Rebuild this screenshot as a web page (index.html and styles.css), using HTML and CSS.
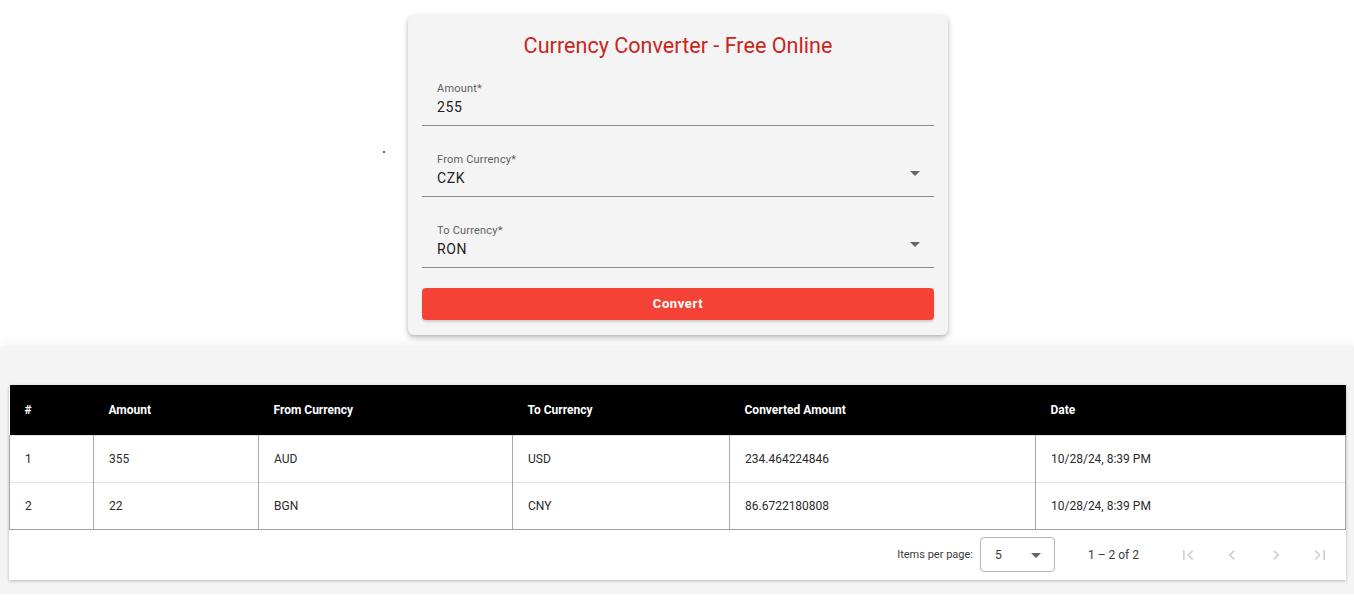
FILE: index.html
```html
<!DOCTYPE html>
<html lang="en">
<head>
<meta charset="utf-8">
<title>Currency Converter - Free Online</title>
<link rel="stylesheet" href="styles.css">
</head>
<body>
<div class="top">
  <div class="side"><span class="speck"></span></div>
  <form class="card">
    <h1 class="title">Currency Converter - Free Online</h1>
    <div class="field">
      <div class="label">Amount*</div>
      <div class="value">255</div>
    </div>
    <div class="field">
      <div class="label">From Currency*</div>
      <div class="value-row"><span class="value">CZK</span><span class="caret"></span></div>
    </div>
    <div class="field">
      <div class="label">To Currency*</div>
      <div class="value-row"><span class="value">RON</span><span class="caret"></span></div>
    </div>
    <button type="button" class="btn">Convert</button>
  </form>
  <div class="side"></div>
</div>

<section class="history">
  <div class="table-card">
    <table class="grid">
      <colgroup>
        <col style="width:84px"><col style="width:165px"><col style="width:254px"><col style="width:217px"><col style="width:306px"><col>
      </colgroup>
      <thead>
        <tr><th>#</th><th>Amount</th><th>From Currency</th><th>To Currency</th><th>Converted Amount</th><th>Date</th></tr>
      </thead>
      <tbody>
        <tr><td>1</td><td>355</td><td>AUD</td><td>USD</td><td>234.464224846</td><td>10/28/24, 8:39 PM</td></tr>
        <tr><td>2</td><td>22</td><td>BGN</td><td>CNY</td><td>86.6722180808</td><td>10/28/24, 8:39 PM</td></tr>
      </tbody>
    </table>
    <div class="paginator">
      <span class="pp-label">Items per page:</span>
      <div class="pp-select"><span>5</span><span class="caret small"></span></div>
      <span class="range">1 – 2 of 2</span>
      <div class="nav">
        <button type="button" class="nav-btn" aria-label="First page"><svg viewBox="0 0 24 24" width="24" height="24"><path d="M18.41 16.59L13.82 12l4.59-4.59L17 6l-6 6 6 6zM6 6h2v12H6z"/></svg></button>
        <button type="button" class="nav-btn" aria-label="Previous page"><svg viewBox="0 0 24 24" width="24" height="24"><path d="M15.41 7.41L14 6l-6 6 6 6 1.41-1.41L10.83 12z"/></svg></button>
        <button type="button" class="nav-btn" aria-label="Next page"><svg viewBox="0 0 24 24" width="24" height="24"><path d="M10 6L8.59 7.41 13.17 12l-4.58 4.59L10 18l6-6z"/></svg></button>
        <button type="button" class="nav-btn" aria-label="Last page"><svg viewBox="0 0 24 24" width="24" height="24"><path d="M5.59 7.41L10.18 12l-4.59 4.59L7 18l6-6-6-6zM16 6h2v12h-2z"/></svg></button>
      </div>
    </div>
  </div>
</section>
</body>
</html>
```

FILE: styles.css
```css
* { box-sizing: border-box; }

html, body {
  margin: 0;
  padding: 0;
  background: #ffffff;
  font-family: Roboto, "Liberation Sans", Arial, sans-serif;
  color: #212121;
}

.top {
  display: grid;
  grid-template-columns: 1fr 540px 1fr;
  padding-top: 15px;
  padding-left: 2px;
}

.side {
  display: flex;
  justify-content: flex-end;
  align-items: flex-start;
}

.speck {
  width: 2px;
  height: 2px;
  border-radius: 50%;
  background: #333;
  margin-top: 136px;
  margin-right: 23px;
}

.card {
  background: #f4f4f4;
  border-radius: 6px;
  box-shadow: 0 3px 6px rgba(0,0,0,0.22), 0 1px 3px rgba(0,0,0,0.12);
  padding: 15px 14px 15px;
  display: flex;
  flex-direction: column;
}

.title {
  margin: 0;
  font-size: 21.6px;
  line-height: 32px;
  font-weight: 400;
  color: #c9261c;
  text-align: center;
}

.field {
  padding: 1px 15px 8px;
  border-bottom: 1px solid #8c8c8c;
  margin-top: 26px;
}
.title + .field { margin-top: 19px; }

.label {
  font-size: 11px;
  line-height: 14px;
  color: #5f5f5f;
  letter-spacing: 0.2px;
}

.value {
  font-size: 14px;
  line-height: 20px;
  color: #222;
  letter-spacing: 0.6px;
  margin-top: 1px;
  display: block;
}

.value-row {
  display: flex;
  justify-content: space-between;
  align-items: center;
}

.caret {
  width: 0;
  height: 0;
  border-left: 5px solid transparent;
  border-right: 5px solid transparent;
  border-top: 5px solid #666;
  margin-right: -1px;
  margin-top: -8px;
}
.caret.small { margin-top: 2px; margin-right: 0; }

.btn {
  margin-top: 20px;
  height: 32px;
  border: none;
  border-radius: 4px;
  background: #f44336;
  color: #fff;
  font-family: Roboto, "Liberation Sans", Arial, sans-serif;
  font-size: 13px;
  font-weight: 700;
  letter-spacing: 0.6px;
  padding-bottom: 2px;
  box-shadow: 0 2px 2px rgba(0,0,0,0.15);
}

.history {
  margin-top: 12px;
  background: #f4f4f4;
  padding: 38px 8px 14px 9px;
  box-shadow: 0 2px 3px rgba(0,0,0,0.35), 0 -6px 8px rgba(0,0,0,0.03);
}

.table-card {
  background: #fff;
  box-shadow: 0 1px 3px rgba(0,0,0,0.25);
}

.grid {
  width: 100%;
  border-collapse: collapse;
  table-layout: fixed;
  font-size: 12px;
}

.grid th {
  background: #000;
  color: #fff;
  font-weight: 700;
  text-align: left;
  height: 50px;
  padding: 0 15px;
  font-size: 12px;
}

.grid td {
  height: 47px;
  padding: 0 15px;
  color: #2a2a2a;
  border-left: 1px solid #a8a8a8;
  border-right: 1px solid #a8a8a8;
  border-top: 1px solid #e2e2e2;
}
.grid tbody tr:last-child td { border-bottom: 1px solid #a0a0a0; }

.paginator {
  height: 50px;
  display: flex;
  align-items: center;
  justify-content: flex-end;
  padding-right: 6px;
  font-size: 11px;
  color: #3a3a3a;
}

.pp-label { margin-right: 7px; }

.pp-select {
  width: 75px;
  height: 35px;
  border: 1px solid #b5b5b5;
  border-radius: 4px;
  display: flex;
  align-items: center;
  justify-content: space-between;
  padding: 0 13px 0 14px;
  font-size: 12px;
}

.range {
  margin-left: 33px;
  margin-right: 29px;
  font-size: 12px;
}

.nav { display: flex; gap: 4px; }

.nav-btn {
  width: 40px;
  height: 40px;
  border: none;
  background: transparent;
  padding: 0;
  display: flex;
  align-items: center;
  justify-content: center;
}
.nav-btn svg { fill: #d0d0d0; width: 20px; height: 20px; }
```
